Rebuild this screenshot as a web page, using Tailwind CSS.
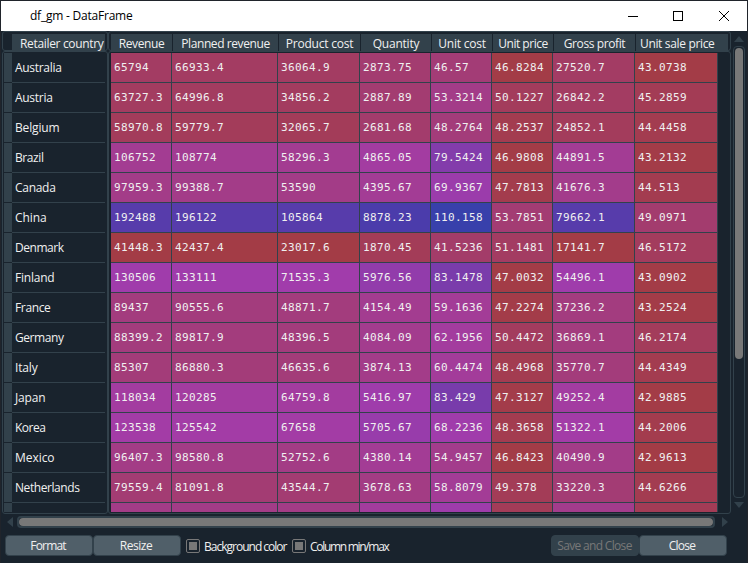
<!DOCTYPE html>
<html lang="en">
<head>
<meta charset="utf-8">
<title>df_gm - DataFrame</title>
<script src="https://cdn.jsdelivr.net/npm/@tailwindcss/browser@4"></script>
</head>
<body class="w-[748px] h-[563px] overflow-hidden bg-[#19232d] font-['Open_Sans','Noto_Sans',sans-serif] text-[12px] leading-[16px] text-[#f0f0f0]">
<div class="flex h-[563px] w-[748px] flex-col border-t border-l border-r border-[#20242b]">
  <header class="flex h-[30px] shrink-0 items-center bg-white pl-[29px] text-black">
    <span class="whitespace-nowrap" data-w="102">df_gm - DataFrame</span>
    <svg class="ml-auto mr-[17px] h-[12px] w-[104px]" viewBox="0 0 104 12" fill="none" stroke="#000" shape-rendering="crispEdges">
      <path d="M2 6.5H12M47.500 1.500H56.500V10.500H47.500Z"/>
      <path d="M93 1L103 11M103 1L93 11" shape-rendering="auto"/>
    </svg>
  </header>
  <main class="flex h-[484px] shrink-0 pl-px">
    <section class="flex w-[106px] shrink-0 flex-col">
      <div class="flex h-[20px] shrink-0 rounded-[3px] border border-[#32414b] pt-[2px] pl-[9px]">
        <div class="flex h-[17px] w-[93px] items-center bg-[#32414b] pt-[2px] pl-[8px]"><span class="whitespace-nowrap" data-w="83">Retailer country</span></div>
      </div>
      <div class="h-[463px] rounded-[3px] border border-[#32414b] pt-px pl-px"><div id="index" class="h-[459px] overflow-hidden"></div></div>
    </section>
    <section class="flex w-[623px] shrink-0 flex-col">
      <div class="flex h-[20px] shrink-0 rounded-[3px] border border-[#32414b] pt-[2px] pl-[2px]">
        <div id="heads" class="flex h-[17px] w-[617px] bg-[#32414b] pt-[2px]"></div>
      </div>
      <div class="h-[463px] rounded-[3px] border border-[#32414b] pt-px pl-px"><div id="grid" class="ml-px h-[459px] overflow-hidden"></div></div>
    </section>
    <aside class="flex w-[16px] flex-col items-center pt-[5px]">
      <svg class="h-[6px] w-[10px]" viewBox="0 0 10 6"><path d="M0 6L5 0L10 6Z" fill="#32414b"/></svg>
      <div class="mt-[4px] h-[452px] w-[12px] rounded-[4px] border border-[#32414b] p-px"><div class="h-[311px] rounded-[4px] bg-[#787878]"></div></div>
      <svg class="mt-[4px] h-[6px] w-[10px]" viewBox="0 0 10 6"><path d="M0 0H10L5 6Z" fill="#32414b"/></svg>
    </aside>
  </main>
  <div class="flex h-[14px] shrink-0 items-center pl-[6px]">
    <svg class="h-[10px] w-[6px]" viewBox="0 0 6 10"><path d="M6 0V10L0 5Z" fill="#32414b"/></svg>
    <div class="ml-[4px] h-[12px] w-[698px] rounded-[4px] border-2 border-[#32414b]"><div class="h-[8px] w-[694px] rounded-[4px] bg-[#787878]"></div></div>
    <svg class="ml-[7px] h-[10px] w-[6px]" viewBox="0 0 6 10"><path d="M0 0V10L6 5Z" fill="#32414b"/></svg>
  </div>
  <footer class="flex h-[34px] shrink-0 items-start pt-[6px] pl-[4px] leading-[20px]">
    <button class="h-[21px] w-[88px] rounded-[4px] border border-[#32414b] bg-[#505f69] pr-[2px]"><span data-w="35">Format</span></button>
    <button class="h-[21px] w-[88px] rounded-[4px] border border-[#32414b] bg-[#505f69] pr-[2px]"><span data-w="32">Resize</span></button>
    <span class="mt-[4px] ml-[5px] size-[14px] rounded-[2px] border border-[#787878] p-[2px]"><span class="block size-[8px] bg-[#787878]"></span></span>
    <label class="mt-[2px] ml-[4px] w-[82px] whitespace-nowrap"><span data-w="82">Background color</span></label>
    <span class="mt-[4px] ml-[6px] size-[14px] rounded-[2px] border border-[#787878] p-[2px]"><span class="block size-[8px] bg-[#787878]"></span></span>
    <label class="mt-[2px] ml-[4px] whitespace-nowrap"><span data-w="78">Column min/max</span></label>
    <button class="ml-auto h-[21px] w-[88px] rounded-[4px] border border-[#32414b] bg-[#32414b] pr-px whitespace-nowrap text-[#787878]"><span data-w="74">Save and Close</span></button>
    <button class="mr-[20px] h-[21px] w-[88px] rounded-[4px] border border-[#32414b] bg-[#505f69] pr-[2px]"><span data-w="26">Close</span></button>
  </footer>
</div>
<script>
const columns = [
  // title, cell width, title width, minimum, maximum
  ['Revenue', 61, 45, 41448.3, 223400],
  ['Planned revenue', 106, 88, 42437.4, 227600],
  ['Product cost', 82, 67, 23017.6, 122832],
  ['Quantity', 71, 46, 1150, 9833],
  ['Unit cost', 61, 47, 28, 110.158],
  ['Unit price', 61, 49, 46.8, 80],
  ['Gross profit', 82, 61, 17141.7, 92468],
  ['Unit sale price', 83, 74, 42.96, 76],
];
const rows = `Australia 65794 66933.4 36064.9 2873.75 46.57 46.8284 27520.7 43.0738
Austria 63727.3 64996.8 34856.2 2887.89 53.3214 50.1227 26842.2 45.2859
Belgium 58970.8 59779.7 32065.7 2681.68 48.2764 48.2537 24852.1 44.4458
Brazil 106752 108774 58296.3 4865.05 79.5424 46.9808 44891.5 43.2132
Canada 97959.3 99388.7 53590 4395.67 69.9367 47.7813 41676.3 44.513
China 192488 196122 105864 8878.23 110.158 53.7851 79662.1 49.0971
Denmark 41448.3 42437.4 23017.6 1870.45 41.5236 51.1481 17141.7 46.5172
Finland 130506 133111 71535.3 5976.56 83.1478 47.0032 54496.1 43.0902
France 89437 90555.6 48871.7 4154.49 59.1636 47.2274 37236.2 43.2524
Germany 88399.2 89817.9 48396.5 4084.09 62.1956 50.4472 36869.1 46.2174
Italy 85307 86880.3 46635.6 3874.13 60.4474 48.4968 35770.7 44.4349
Japan 118034 120285 64759.8 5416.97 83.429 47.3127 49252.4 42.9885
Korea 123538 125542 67658 5705.67 68.2236 48.3658 51322.1 44.2006
Mexico 96407.3 98580.8 52752.6 4380.14 54.9457 46.8423 40490.9 42.9613
Netherlands 79559.4 81091.8 43544.7 3678.63 58.8079 49.378 33220.3 44.6266`.split('\n').map(r => r.split(' '));
const names = { Australia: 46, Austria: 37, Belgium: 44, Brazil: 28, Canada: 40, China: 31, Denmark: 48, Finland: 39, France: 35,
  Germany: 48, Italy: 22, Japan: 30, Korea: 30, Mexico: 39, Netherlands: 64 };
const partial = ['', 97000, 99000, 53000, 4700, 69, 49.5, 42000, 45.5];

// Hue runs from .66 (column maximum) to .99 (column minimum), at 60% opacity.
function shade(v, lo, hi) {
  const h = (0.66 + 0.33 * (hi - v) / (hi - lo)) * 6;
  const f = n => { const k = (n + h) % 6; return Math.round(255 * (1 - 0.7 * Math.max(0, Math.min(k, 4 - k, 1)))); };
  return `rgba(${f(5)},${f(3)},${f(1)},0.6)`;
}
document.getElementById('heads').innerHTML = columns.map((c, i) => {
  const w = i === 0 ? 62 : i === 7 ? 93 : c[1];
  const edge = i < 7 ? 'border-r border-[#19232d]' : '';
  const pad = i === 7 ? 'pl-[4px]' : 'justify-center';
  return `<div class="-mt-[2px] flex h-[17px] shrink-0 items-center pt-[2px] ${pad} ${edge} whitespace-nowrap" style="width:${w}px"><span data-w="${c[2]}">${c[0]}</span></div>`;
}).join('');
document.getElementById('index').innerHTML = [...rows, partial].map(r =>
  `<div class="flex h-[30px]"><div class="h-[30px] w-[8px] border-b border-[#19232d] bg-[#32414b]"></div><div class="h-[30px] w-[93px] border-b border-[#32414b] pl-[3px] leading-[30px]"><span data-w="${names[r[0]] || 0}">${r[0]}</span></div></div>`).join('');
document.getElementById('grid').innerHTML = [...rows, partial].map((r, ri) =>
  `<div class="flex h-[30px]">` + columns.map((c, i) =>
    `<div class="h-[30px] shrink-0 border-r border-b border-[#32414b] bg-clip-padding pl-[3px] font-['DejaVu_Sans_Mono',monospace] text-[11px] leading-[29px] tracking-[0.38px]" style="width:${c[1]}px;background-color:${shade(+r[i + 1], c[3], c[4])}">${ri < 15 ? r[i + 1] : ''}</div>`).join('') + '</div>').join('');
// Set the tracking of each label so that it takes its intended width.
const pen = document.createElement('canvas').getContext('2d');
pen.font = '12px "Open Sans"';
document.querySelectorAll('[data-w]').forEach(e => {
  const n = e.textContent.length;
  if (n) e.style.letterSpacing = ((+e.dataset.w + 0.5 - pen.measureText(e.textContent).width) / n).toFixed(3) + 'px';
});
</script>
</body>
</html>
